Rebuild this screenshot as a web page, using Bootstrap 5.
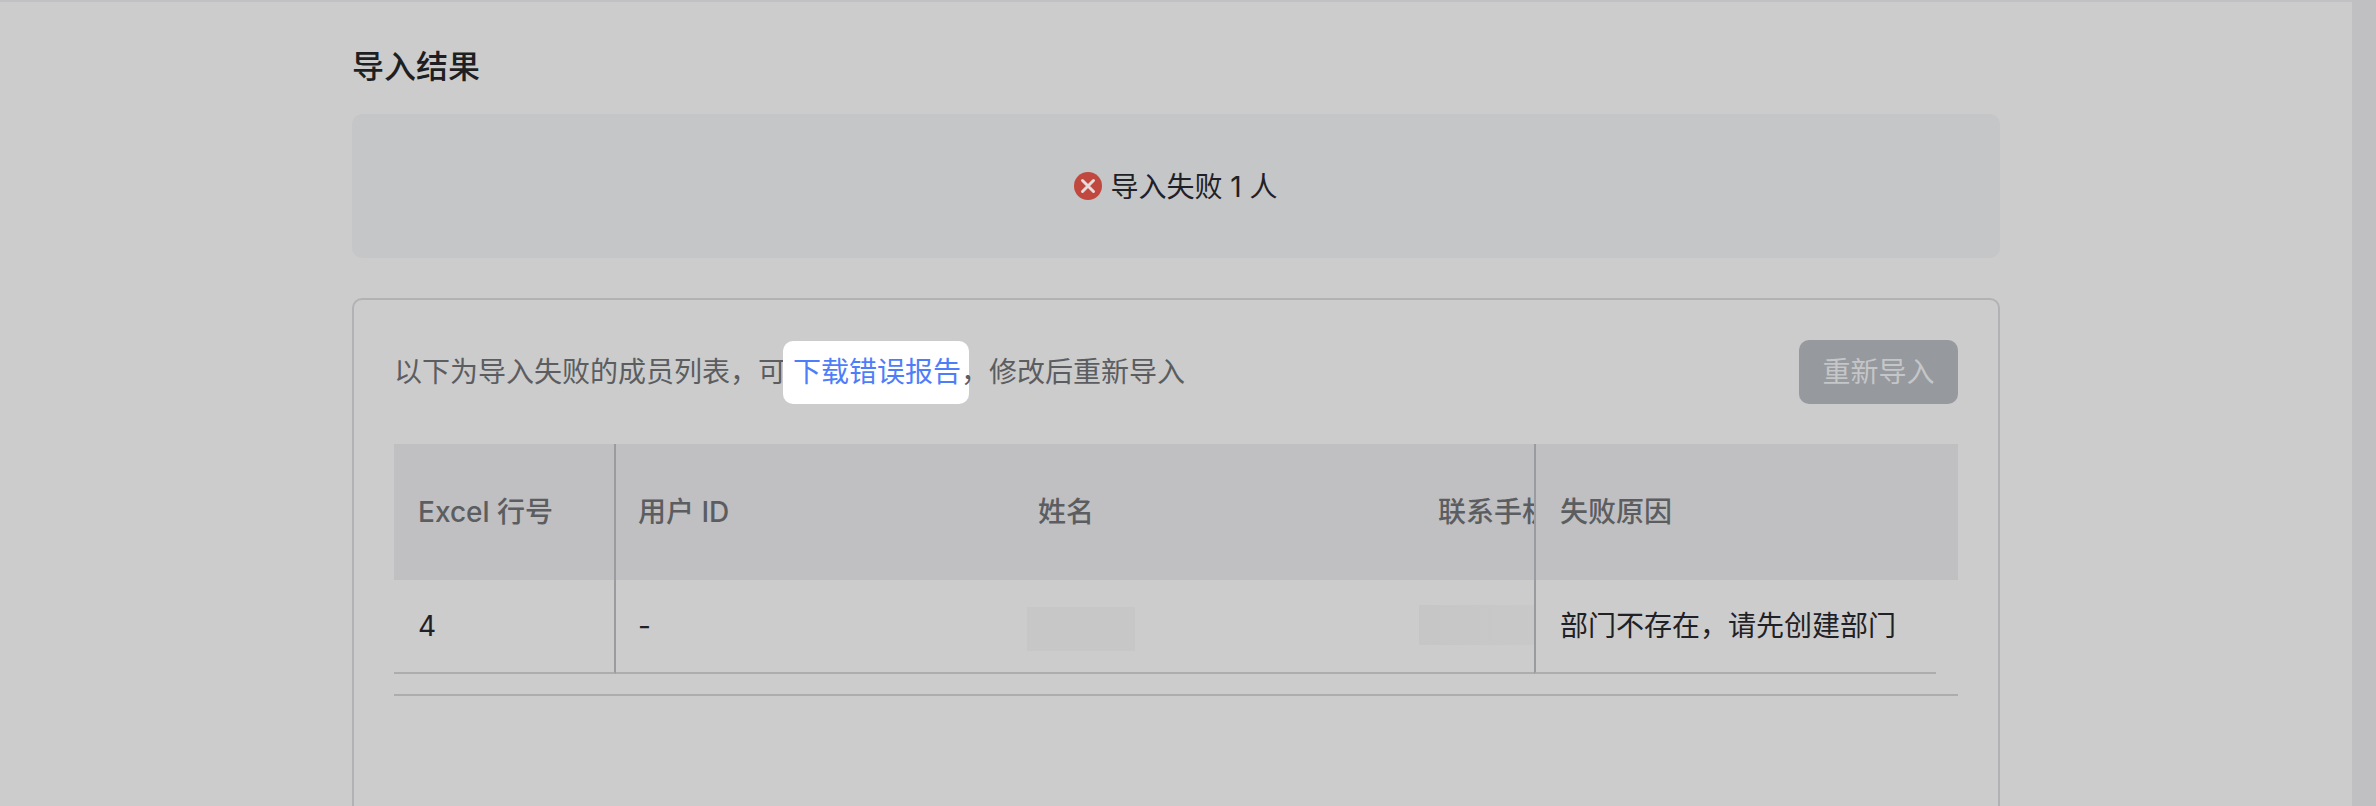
<!DOCTYPE html>
<html lang="zh-CN">
<head>
<meta charset="utf-8">
<title>导入结果</title>
<link href="https://cdn.jsdelivr.net/npm/bootstrap@5.3.0/dist/css/bootstrap.min.css" rel="stylesheet">
<style>
html, body { height: 100%; }
body { background: #cccccc; overflow: hidden; font-family: Inter, "Noto Sans CJK SC", sans-serif; font-size: 28px; color: #1f2126; }
.shell { height: 100vh; }
.main-area { border-top: 2px solid #c1c1c3; min-width: 0; }
.scroll-rail { width: 24px; background: #c0c0c2; }
.content-col { width: 1648px; margin: 0 auto; }
.page-title { font-size: 32px; line-height: 48px; font-weight: 500; margin: 41px 0 23px; color: #1d1f23; }
.result-box { height: 144px; background: #c5c6c8; border-radius: 10px; gap: 8px; line-height: 40px; }
.result-label { padding-top: 2px; }
.panel { margin-top: 40px; height: 900px; border: 2px solid #b2b2b5; border-radius: 10px; padding: 40px; background: transparent; }
.hint-text { color: #5b5d61; line-height: 40px; white-space: nowrap; }
.spot-link { display: inline-block; line-height: 63px; padding: 0 8px 0 10px; margin: 0 -8px 0 -3px; background: #fff; color: #4e7dfa; border-radius: 10px; text-decoration: none; }
.retry-btn { width: 159px; height: 64px; padding: 0; font-size: 28px; line-height: 64px; border: 0; border-radius: 10px; --bs-btn-disabled-bg: #96999d; --bs-btn-disabled-color: #c5c6c8; --bs-btn-disabled-opacity: 1; }
.table-wrap { margin-top: 40px; border-bottom: 2px solid #adadad; padding-bottom: 20px; }
.result-table { width: 1564px; margin: 0; table-layout: fixed; border-collapse: separate; border-spacing: 0; --bs-table-bg: transparent; --bs-table-color: #1f2126; --bs-table-border-color: #adadad; }
.result-table thead { background: #c0c0c2; }
.result-table > thead > tr > th { height: 136px; padding: 0 0 0 24px; border-bottom: 0; font-weight: 500; color: #5b5d61; vertical-align: middle; white-space: nowrap; overflow: hidden; }
.result-table > tbody > tr > td { height: 94px; padding: 0 0 0 24px; border-bottom-width: 2px; vertical-align: middle; white-space: nowrap; overflow: hidden; }
.result-table > tbody > tr > td.spacer-cell { border-bottom: 0; padding: 0; }
.result-table > thead > tr > .pin-left, .result-table > tbody > tr > .pin-left { border-right: 2px solid #9a9b9f; }
.result-table > thead > tr > .pin-right, .result-table > tbody > tr > .pin-right { border-left: 2px solid #9a9b9f; padding-left: 24px; }
.result-table > thead > tr > .cell-user, .result-table > tbody > tr > .cell-user { padding-left: 22px; }
.result-table > tbody > tr > .cell-name { padding-left: 13px; }
.result-table > tbody > tr > .cell-phone { padding-left: 5px; }
.mask-name { width: 108px; height: 44px; margin-top: 6px; background: #c7c7c7; }
.mask-phone { width: 140px; height: 40px; margin-top: -2px; background: linear-gradient(90deg, #c6c6c6, #c9c9c9); }
</style>
</head>
<body>
<div class="shell d-flex">
  <div class="main-area flex-grow-1">
    <div class="content-col">
      <h1 class="page-title">导入结果</h1>
      <div class="result-box d-flex align-items-center justify-content-center">
        <svg width="28" height="28" viewBox="0 0 28 28" aria-hidden="true"><circle cx="14" cy="14" r="14" fill="#c0483f"/><path d="M8.5 8.5l11 11M19.5 8.5l-11 11" stroke="#e5dcdb" stroke-width="3" stroke-linecap="round" fill="none"/></svg>
        <span class="result-label">导入失败 1 人</span>
      </div>
      <div class="card panel">
        <div class="d-flex align-items-center justify-content-between">
          <div class="hint-text">以下为导入失败的成员列表，可<a class="spot-link" href="#">下载错误报告</a>，修改后重新导入</div>
          <button class="btn retry-btn" type="button" disabled>重新导入</button>
        </div>
        <div class="table-wrap">
          <table class="table result-table">
            <colgroup><col style="width:222px"><col style="width:398px"><col style="width:400px"><col style="width:120px"><col style="width:402px"><col style="width:22px"></colgroup>
            <thead>
              <tr>
                <th class="pin-left">Excel 行号</th>
                <th class="cell-user">用户 ID</th>
                <th>姓名</th>
                <th>联系手机号</th>
                <th class="pin-right" colspan="2">失败原因</th>
              </tr>
            </thead>
            <tbody>
              <tr>
                <td class="pin-left">4</td>
                <td class="cell-user">-</td>
                <td class="cell-name"><div class="mask-name"></div></td>
                <td class="cell-phone"><div class="mask-phone"></div></td>
                <td class="pin-right">部门不存在，请先创建部门</td>
                <td class="spacer-cell"></td>
              </tr>
            </tbody>
          </table>
        </div>
      </div>
    </div>
  </div>
  <div class="scroll-rail flex-shrink-0"></div>
</div>
<script src="https://cdn.jsdelivr.net/npm/bootstrap@5.3.0/dist/js/bootstrap.bundle.min.js"></script>
</body>
</html>
